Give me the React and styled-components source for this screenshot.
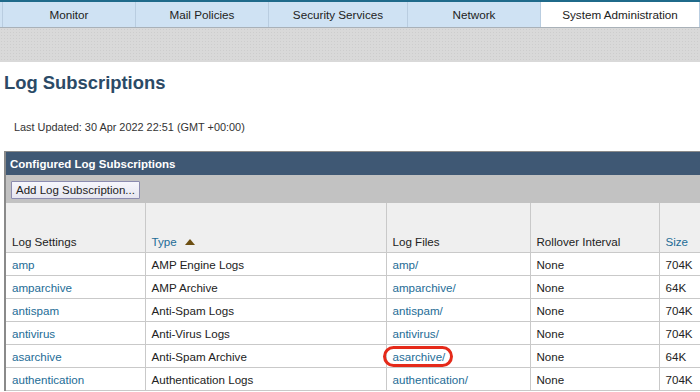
import styled, { createGlobalStyle } from 'styled-components'

const GlobalStyle = createGlobalStyle`
  body {
    margin: 0;
    background: #fff;
    font-family: "Liberation Sans", Arial, sans-serif;
    overflow: hidden;
  }
`

const Page = styled.div`
  width: 700px;
  height: 392px;
  overflow: hidden;
`

const TabBar = styled.div`
  display: grid;
  grid-template-columns: 3px 133px 133px 139px 133px 1fr;
  height: 25px;
  border-top: 2px solid #1f6a8a;
  border-bottom: 1px solid #a9b1b8;
  background: #cfe2f3;
`

const Tab = styled.div`
  display: flex;
  align-items: center;
  justify-content: center;
  font-size: 11.7px;
  color: #222;
  border-right: 1px solid #b9cde0;
  background: ${(p) => (p.active ? '#fff' : '#cfe2f3')};
`

const Band = styled.div`
  height: 34px;
  background-color: #d9d9d9;
  background-image: radial-gradient(#cdcdcd 0.8px, transparent 0.8px);
  background-size: 3px 3px;
`

const Title = styled.h1`
  margin: 0;
  padding: 10px 0 0 4px;
  height: 33px;
  font-size: 18.4px;
  line-height: 22px;
  font-weight: bold;
  color: #2b4a66;
`

const Updated = styled.div`
  padding: 16px 0 0 14px;
  height: 30px;
  font-size: 10.9px;
  color: #333;
`

const Panel = styled.div`
  margin-left: 4px;
  border-left: 2px solid #8a8a8a;
  border-top: 1px solid #8a8a8a;
  width: 780px;
`

const PanelHead = styled.div`
  height: 23px;
  display: flex;
  align-items: center;
  padding-left: 4px;
  background: #3f5874;
  color: #fff;
  font-size: 11.5px;
  font-weight: bold;
`

const Toolbar = styled.div`
  height: 28px;
  display: flex;
  align-items: center;
  padding-left: 5px;
  background: #c2c2c2;
`

const Button = styled.button`
  height: 18px;
  padding: 0 4px;
  font-family: "Liberation Sans", Arial, sans-serif;
  font-size: 11.5px;
  color: #222;
  background: linear-gradient(#f6f6fc, #e6e6f0);
  border: 1px solid #8c8cb0;
  border-radius: 1px;
  margin-top: 2px;
`

const Table = styled.table`
  border-collapse: collapse;
  table-layout: fixed;
  width: 778px;
  font-size: 11.6px;
`

const HeadCell = styled.th`
  height: 45px;
  vertical-align: bottom;
  text-align: left;
  font-weight: normal;
  padding: 0 6px 4px;
  background: #efefef;
  border-left: 1px solid #c9c9c9;
  border-bottom: 1px solid #c9c9c9;
  color: ${(p) => (p.sortable ? '#1d6c96' : '#222')};
  &:first-child {
    border-left: none;
  }
`

const Cell = styled.td`
  height: 22px;
  padding: 0 6px;
  border-left: 1px solid #c9c9c9;
  border-bottom: 1px solid #c9c9c9;
  color: #222;
  position: relative;
  &:first-child {
    border-left: none;
  }
`

const Link = styled.a`
  color: #1d6c96;
  text-decoration: none;
`

const SortArrow = styled.span`
  display: inline-block;
  margin-left: 8px;
  width: 0;
  height: 0;
  border-left: 5px solid transparent;
  border-right: 5px solid transparent;
  border-bottom: 6px solid #6d4f12;
  vertical-align: 1px;
`

const Highlight = styled.span`
  position: absolute;
  left: -4px;
  top: 1px;
  width: 64px;
  height: 15px;
  border: 3px solid #e52a1a;
  border-radius: 11px;
`

const tabs = ['Monitor', 'Mail Policies', 'Security Services', 'Network', 'System Administration']

const rows = [
  ['amp', 'AMP Engine Logs', 'amp/', 'None', '704K'],
  ['amparchive', 'AMP Archive', 'amparchive/', 'None', '64K'],
  ['antispam', 'Anti-Spam Logs', 'antispam/', 'None', '704K'],
  ['antivirus', 'Anti-Virus Logs', 'antivirus/', 'None', '704K'],
  ['asarchive', 'Anti-Spam Archive', 'asarchive/', 'None', '64K'],
  ['authentication', 'Authentication Logs', 'authentication/', 'None', '704K'],
]

export default function App() {
  return (
    <Page>
      <GlobalStyle />
      <TabBar>
        <Tab />
        {tabs.map((t) => (
          <Tab key={t} active={t === 'System Administration'}>{t}</Tab>
        ))}
      </TabBar>
      <Band />
      <Title>Log Subscriptions</Title>
      <Updated>Last Updated: 30 Apr 2022 22:51 (GMT +00:00)</Updated>
      <Panel>
        <PanelHead>Configured Log Subscriptions</PanelHead>
        <Toolbar>
          <Button>Add Log Subscription...</Button>
        </Toolbar>
        <Table>
          <colgroup>
            <col style={{ width: 139 }} />
            <col style={{ width: 241 }} />
            <col style={{ width: 144 }} />
            <col style={{ width: 129 }} />
            <col style={{ width: 125 }} />
          </colgroup>
          <thead>
            <tr>
              <HeadCell>Log Settings</HeadCell>
              <HeadCell sortable>Type<SortArrow /></HeadCell>
              <HeadCell>Log Files</HeadCell>
              <HeadCell>Rollover Interval</HeadCell>
              <HeadCell sortable>Size</HeadCell>
            </tr>
          </thead>
          <tbody>
            {rows.map((r) => (
              <tr key={r[0]}>
                <Cell><Link href="#">{r[0]}</Link></Cell>
                <Cell>{r[1]}</Cell>
                <Cell>
                  <Link href="#">{r[2]}</Link>
                  {r[0] === 'asarchive' && <Highlight />}
                </Cell>
                <Cell>{r[3]}</Cell>
                <Cell>{r[4]}</Cell>
              </tr>
            ))}
          </tbody>
        </Table>
      </Panel>
    </Page>
  )
}
